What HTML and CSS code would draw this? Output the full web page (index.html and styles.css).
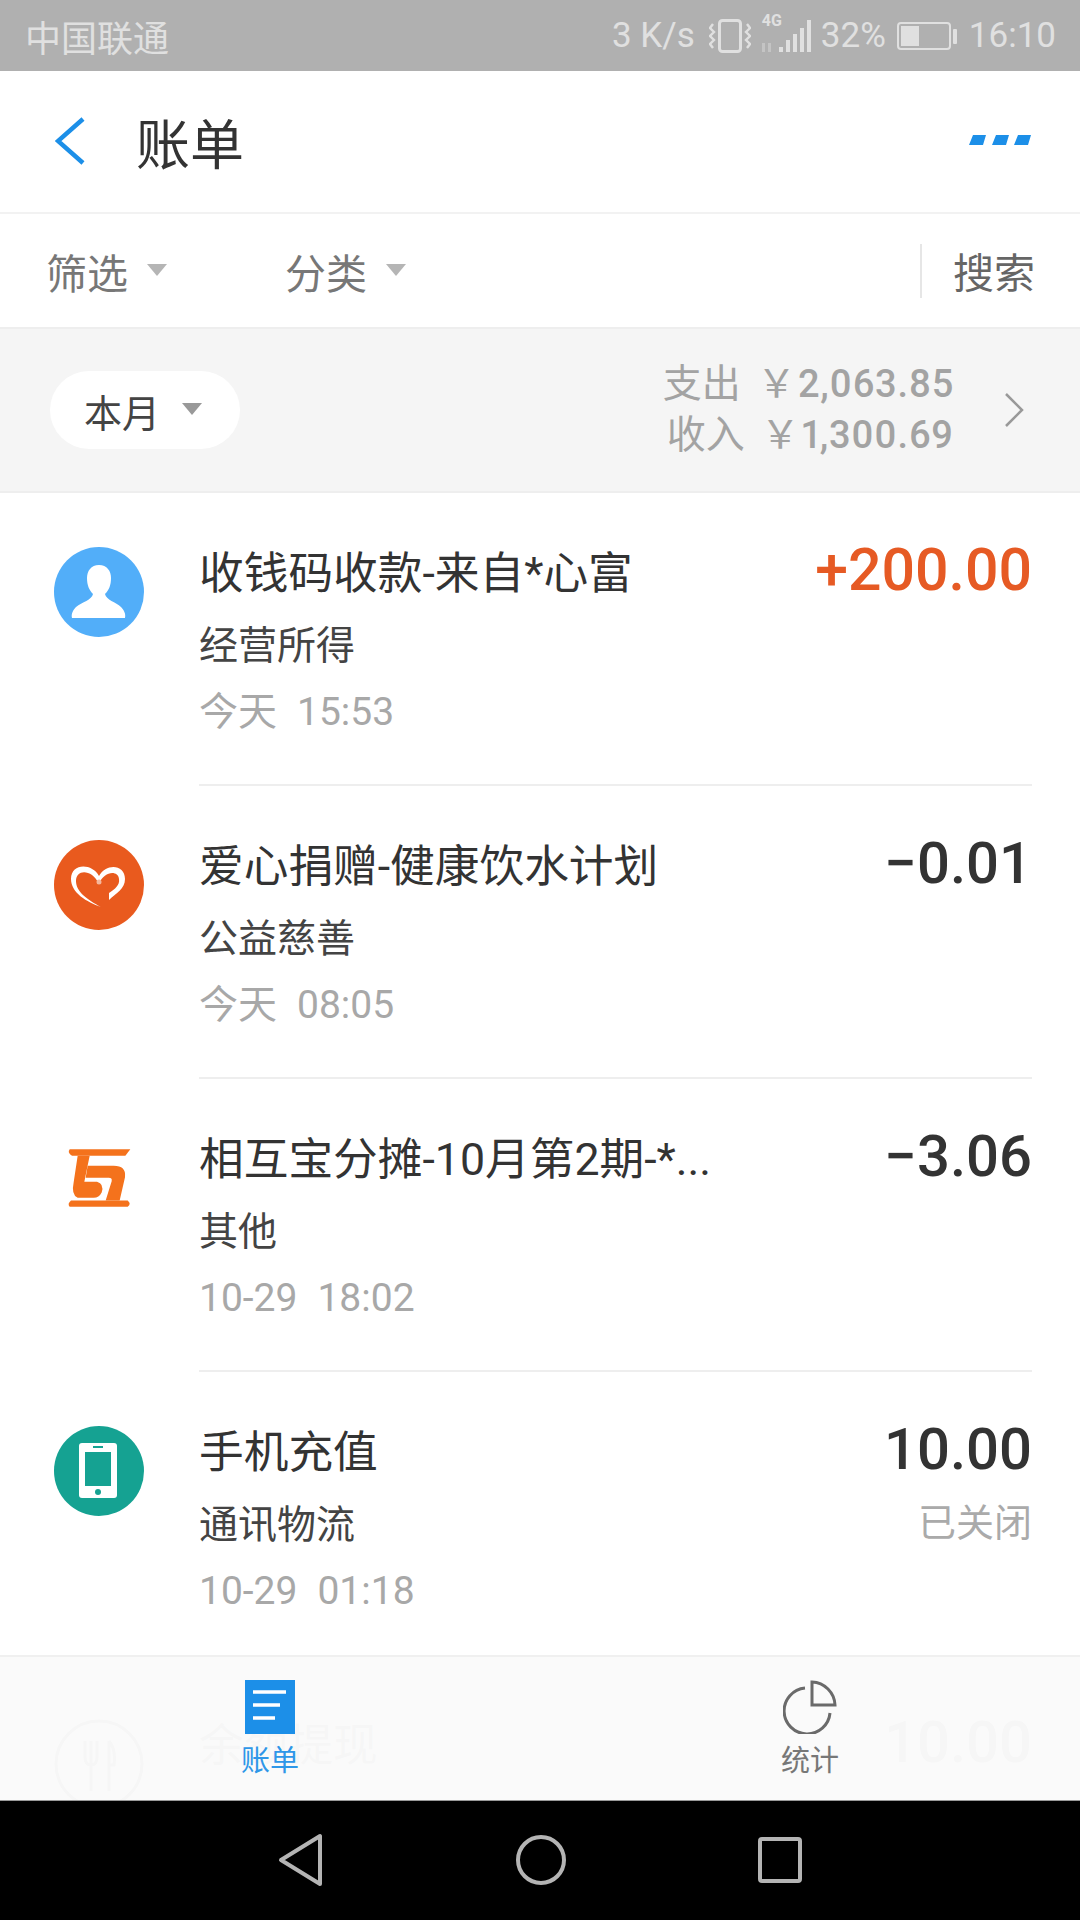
FILE: index.html
```html
<!DOCTYPE html>
<html>
<head>
<meta charset="UTF-8">
<title>账单</title>
<link rel="stylesheet" href="styles.css">
</head>
<body>
<div class="page">

	<!-- status bar -->
	<div class="status">
		<span class="carrier">中国联通</span>
		<div class="statusRight">
			<span class="speed">3 K/s</span>
			<svg class="icoVibrate" width="42" height="34" viewBox="0 0 42 34" fill="none" stroke="#e0e0e0">
				<rect x="10.5" y="1.5" width="21" height="31" rx="3" stroke-width="3"/>
				<path d="M4 5 L1 9 L5 13 L1 17 L5 21 L1 25 L4 29 M38 5 L41 9 L37 13 L41 17 L37 21 L41 25 L38 29" stroke-width="2.4"/>
			</svg>
			<div class="net">
				<span class="netText">4G</span>
				<svg width="54" height="34" viewBox="0 0 54 34" fill="#e0e0e0">
					<rect x="19" y="28" width="4" height="5"/>
					<rect x="26" y="21" width="4" height="12"/>
					<rect x="33" y="15" width="4" height="18"/>
					<rect x="40" y="9" width="4" height="24"/>
					<rect x="47" y="1" width="4" height="32"/>
					<path d="M2 24 h3 v9 h-3z M8 24 h3 v9 h-3z" fill="#c4c4c4"/>
				</svg>
			</div>
			<span class="pct">32%</span>
			<svg class="icoBattery" width="61" height="28" viewBox="0 0 61 28" fill="none">
				<rect x="1" y="1" width="52" height="26" rx="3" stroke="#e0e0e0" stroke-width="2"/>
				<rect x="4" y="4" width="18" height="20" fill="#e0e0e0"/>
				<rect x="56" y="7" width="4" height="15" rx="1" fill="#e0e0e0"/>
			</svg>
			<span class="time">16:10</span>
		</div>
	</div>

	<!-- title -->
	<div class="header">
		<svg class="back" width="30" height="48" viewBox="0 0 30 48" fill="none" stroke="#1c8fe8" stroke-width="4.5">
			<path d="M28 2 L3 24 L28 46"/>
		</svg>
		<h1 class="title">账单</h1>
		<svg class="more" width="62" height="12" viewBox="0 0 62 12" fill="#1c8fe8">
			<path d="M4 1 H17 L14 11 H0z M27 1 H40 L37 11 H23z M49 1 H62 L59 11 H45z"/>
		</svg>
	</div>

	<!-- filter -->
	<div class="filter">
		<div class="filterItem filterFirst">筛选<span class="arrow"></span></div>
		<div class="filterItem">分类<span class="arrow"></span></div>
		<div class="search">搜索</div>
	</div>

	<!-- month summary -->
	<div class="summary">
		<div class="pill">本月<span class="arrow arrowDark"></span></div>
		<div class="totals">
			<div class="totalLine">支出<span class="yen">￥</span><span class="money">2,063.85</span></div>
			<div class="totalLine">收入<span class="yen">￥</span><span class="money">1,300.69</span></div>
		</div>
		<svg class="next" width="20" height="34" viewBox="0 0 20 34" fill="none" stroke="#999" stroke-width="2.5">
			<path d="M2 1 L18 17 L2 33"/>
		</svg>
	</div>

	<div class="content">
		<div class="list">

			<div class="row">
				<div class="rowIcon">
					<svg width="90" height="90" viewBox="0 0 90 90">
						<circle cx="45" cy="45" r="45" fill="#52aef9"/>
						<path fill="#fff" d="M45 18 C37 18 33 24 33 31 C33 38 35 43 39 47 C38 53 28 55 22 60 C19 63 17 67 18 71 H71 C72 67 70 63 67 60 C62 55 52 53 51 47 C55 43 57 38 57 31 C57 24 53 18 45 18Z"/>
					</svg>
				</div>
				<div class="rowBody">
					<div class="rowText">
						<div class="rowTitle">收钱码收款-来自*心富</div>
						<div class="rowSub">经营所得</div>
						<div class="rowTime">今天<span class="clock">15:53</span></div>
					</div>
					<div class="rowAmount"><div class="amount income">+200.00</div></div>
				</div>
			</div>

			<div class="row">
				<div class="rowIcon">
					<svg width="90" height="90" viewBox="0 0 90 90">
						<circle cx="45" cy="45" r="45" fill="#e95a1e"/>
						<path fill="#fff" d="M45 36 C38 23 17 23 17 39 C17 53 33 62 47 67 C34 60 22 52 22 41 C22 29 38 29 45 44Z"/>
						<path fill="#fff" d="M45 36 C52 23 71 24 71 39 C71 49 62 53 55 60 L55 53 C61 49 66 45 65 39 C64 30 50 31 45 44Z"/>
						<circle cx="45" cy="42" r="2.5" fill="#f5b79c"/>
					</svg>
				</div>
				<div class="rowBody">
					<div class="rowText">
						<div class="rowTitle">爱心捐赠-健康饮水计划</div>
						<div class="rowSub">公益慈善</div>
						<div class="rowTime">今天<span class="clock">08:05</span></div>
					</div>
					<div class="rowAmount"><div class="amount">−0.01</div></div>
				</div>
			</div>

			<div class="row">
				<div class="rowIcon">
					<svg width="65" height="62" viewBox="110 80 195 185" fill="#f4721c">
						<path d="M118 86 H300 L285 106 H125 Q110 96 118 86Z"/>
						<path d="M142 106 H178 L162 184 H200 Q222 190 214 216 Q206 232 190 232 H142 Q122 222 130 185Z"/>
						<path d="M172 136 H250 Q288 136 284 170 L268 240 H226 L244 182 Q246 172 235 172 H166Z"/>
						<path d="M122 240 H292 Q304 250 292 259 H118 Q110 250 122 240Z"/>
					</svg>
				</div>
				<div class="rowBody">
					<div class="rowText">
						<div class="rowTitle">相互宝分摊-10月第2期-*...</div>
						<div class="rowSub">其他</div>
						<div class="rowTime">10-29<span class="clock">18:02</span></div>
					</div>
					<div class="rowAmount"><div class="amount">−3.06</div></div>
				</div>
			</div>

			<div class="row">
				<div class="rowIcon">
					<svg width="90" height="90" viewBox="0 0 90 90">
						<circle cx="45" cy="45" r="45" fill="#15a292"/>
						<rect x="25" y="17" width="38" height="55" rx="3" fill="#fff"/>
						<rect x="31" y="26" width="26" height="34" fill="#15a292"/>
						<rect x="39" y="20" width="10" height="2" fill="#15a292"/>
						<circle cx="44" cy="66" r="3" fill="#15a292"/>
					</svg>
				</div>
				<div class="rowBody">
					<div class="rowText">
						<div class="rowTitle">手机充值</div>
						<div class="rowSub">通讯物流</div>
						<div class="rowTime">10-29<span class="clock">01:18</span></div>
					</div>
					<div class="rowAmount">
						<div class="amount">10.00</div>
						<div class="amountNote">已关闭</div>
					</div>
				</div>
			</div>

			<div class="row">
				<div class="rowIcon">
					<svg width="90" height="90" viewBox="0 0 90 90" fill="none" stroke="#333">
						<circle cx="45" cy="45" r="43" stroke-width="3"/>
						<path stroke-width="3" d="M31 22 V38 Q31 46 37 46 Q43 46 43 38 V22 M37 22 V72 M55 22 Q62 30 60 46 H55 M55 22 V72"/>
					</svg>
				</div>
				<div class="rowBody">
					<div class="rowText">
						<div class="rowTitle">余额提现</div>
					</div>
					<div class="rowAmount"><div class="amount">10.00</div></div>
				</div>
			</div>

		</div>

		<!-- tab bar lies over the list, the next row shows through it -->
		<div class="tabs">
			<div class="tab tabOn">
				<svg width="50" height="54" viewBox="0 0 50 54">
					<rect width="50" height="54" fill="#1c8fe8"/>
					<path d="M8 12 H41 M8 25 H35 M8 38 H30" stroke="#fff" stroke-width="3.5"/>
				</svg>
				<span class="tabText">账单</span>
			</div>
			<div class="tab">
				<svg width="54" height="54" viewBox="0 0 54 54" fill="none" stroke="#6a6a6a" stroke-width="3">
					<path d="M22 8 A23 23 0 1 0 47 33"/>
					<path d="M29 2 A24 24 0 0 1 52 25 H29Z"/>
				</svg>
				<span class="tabText">统计</span>
			</div>
		</div>
	</div>

	<!-- system navigation -->
	<div class="nav">
		<svg width="46" height="54" viewBox="0 0 46 54" fill="none" stroke="#b4b4b4" stroke-width="4" stroke-linejoin="round">
			<path d="M42 3 V51 L3 27Z"/>
		</svg>
		<svg width="50" height="50" viewBox="0 0 50 50" fill="none" stroke="#b4b4b4" stroke-width="4">
			<circle cx="25" cy="25" r="23"/>
		</svg>
		<svg width="44" height="46" viewBox="0 0 44 46" fill="none" stroke="#b4b4b4" stroke-width="4">
			<rect x="2" y="2" width="40" height="42" rx="2"/>
		</svg>
	</div>

</div>
</body>
</html>
```

FILE: styles.css
```css
* {box-sizing: border-box;}
html, body {margin: 0; padding: 0;}
body {width: 1080px; height: 1920px; overflow: hidden; background-color: #fff; font-family: "Roboto", "Noto Sans CJK SC", sans-serif; color: #333;}
.page {display: flex; flex-direction: column; height: 1920px;}

.status {display: flex; align-items: center; justify-content: space-between; flex: none; height: 71px; padding: 0 24px 0 25px; background-color: #b0b0b0; color: #e0e0e0; font-size: 35px;}
.carrier {font-size: 36px;}
.statusRight {display: flex; align-items: center;}
.speed {margin-right: 14px;}
.icoVibrate {margin-right: 9px;}
.net {position: relative; margin-right: 7px;}
.net svg {display: block;}
.netText {position: absolute; left: 2px; top: -8px; font-size: 16px; font-weight: 700;}
.pct {margin-right: 11px;}
.icoBattery {margin-right: 11px;}

.header {display: flex; align-items: center; flex: none; height: 143px; padding: 0 49px 0 55px; border-bottom: 2px solid #f2f2f2;}
.back {margin-top: -2px;}
.title {margin: 0 0 0 51px; flex: 1; font-size: 54px; font-weight: 400; color: #333;}
.more {margin-top: -4px;}

.filter {display: flex; align-items: center; flex: none; height: 113px; padding: 0 45px 0 46px; font-size: 41px; color: #777;}
.filterItem {display: flex; align-items: center; width: 239px;}
.arrow {display: block; width: 0; height: 0; margin-left: 19px; margin-top: -2px; border-left: 10px solid transparent; border-right: 10px solid transparent; border-top: 12px solid #b5b5b5;}
.search {margin-left: auto; height: 54px; padding-left: 31px; border-left: 2px solid #e6e6e6; line-height: 60px; color: #666;}

.summary {display: flex; align-items: center; flex: none; height: 166px; padding: 0 56px 0 50px; background-color: #f5f5f5; border-top: 2px solid #eee; border-bottom: 2px solid #eee;}
.pill {display: flex; align-items: center; width: 190px; height: 78px; padding-left: 34px; border-radius: 39px; background-color: #fff; font-size: 38px; color: #444;}
.arrowDark {margin-left: 22px; border-top-color: #999;}
.totals {margin-left: auto; font-size: 39px; color: #a3a3a3;}
.totalLine {display: flex; align-items: center; justify-content: flex-end; height: 51px; line-height: 51px;}
.yen {margin-left: 16px; font-size: 39px;}
.money {margin-left: 2px; font-size: 38px; font-weight: 500; letter-spacing: 0.7px; font-variant-numeric: proportional-nums;}
.next {margin-left: 50px;}

.content {position: relative; flex: 1; overflow: hidden;}
.list {display: flex; flex-direction: column;}
.row {display: flex; flex: none; height: 293px; padding: 0 48px 0 54px;}
.rowIcon {display: flex; align-items: center; justify-content: center; flex: none; width: 90px; height: 90px; margin-top: 54px;}
.rowBody {display: flex; justify-content: space-between; flex: 1; min-width: 0; margin-left: 55px; padding-top: 51px; border-bottom: 2px solid #eee;}
.rowTitle {height: 60px; font-size: 44.7px; line-height: 60px; color: #333;}
.rowSub {height: 52px; margin-top: 16px; font-size: 39px; line-height: 52px; color: #444;}
.rowTime {height: 52px; margin-top: 14px; font-size: 39px; line-height: 52px; color: #a8a8a8;}
.clock {margin-left: 20px;}
.rowAmount {margin-top: -2px; text-align: right;}
.amount {height: 56px; font-size: 58px; font-weight: 500; line-height: 56px; color: #333;}
.income {font-size: 59px; color: #e65a24;}
.amountNote {margin-top: 20px; font-size: 38px; line-height: 52px; color: #aaa;}

.tabs {position: absolute; left: 0; right: 0; bottom: 0; display: flex; height: 145px; padding-top: 23px; background-color: rgba(250, 250, 250, 0.98); border-top: 2px solid #f0f0f0;}
.tab {display: flex; flex-direction: column; align-items: center; flex: 1; color: #777;}
.tabOn {color: #2f97e8;}
.tabText {margin-top: 9px; font-size: 29px; line-height: 36px;}

.nav {display: flex; align-items: center; justify-content: center; gap: 0 192px; flex: none; height: 120px; padding-bottom: 2px; background-color: #000; border-top: 1px solid #999;}
```
